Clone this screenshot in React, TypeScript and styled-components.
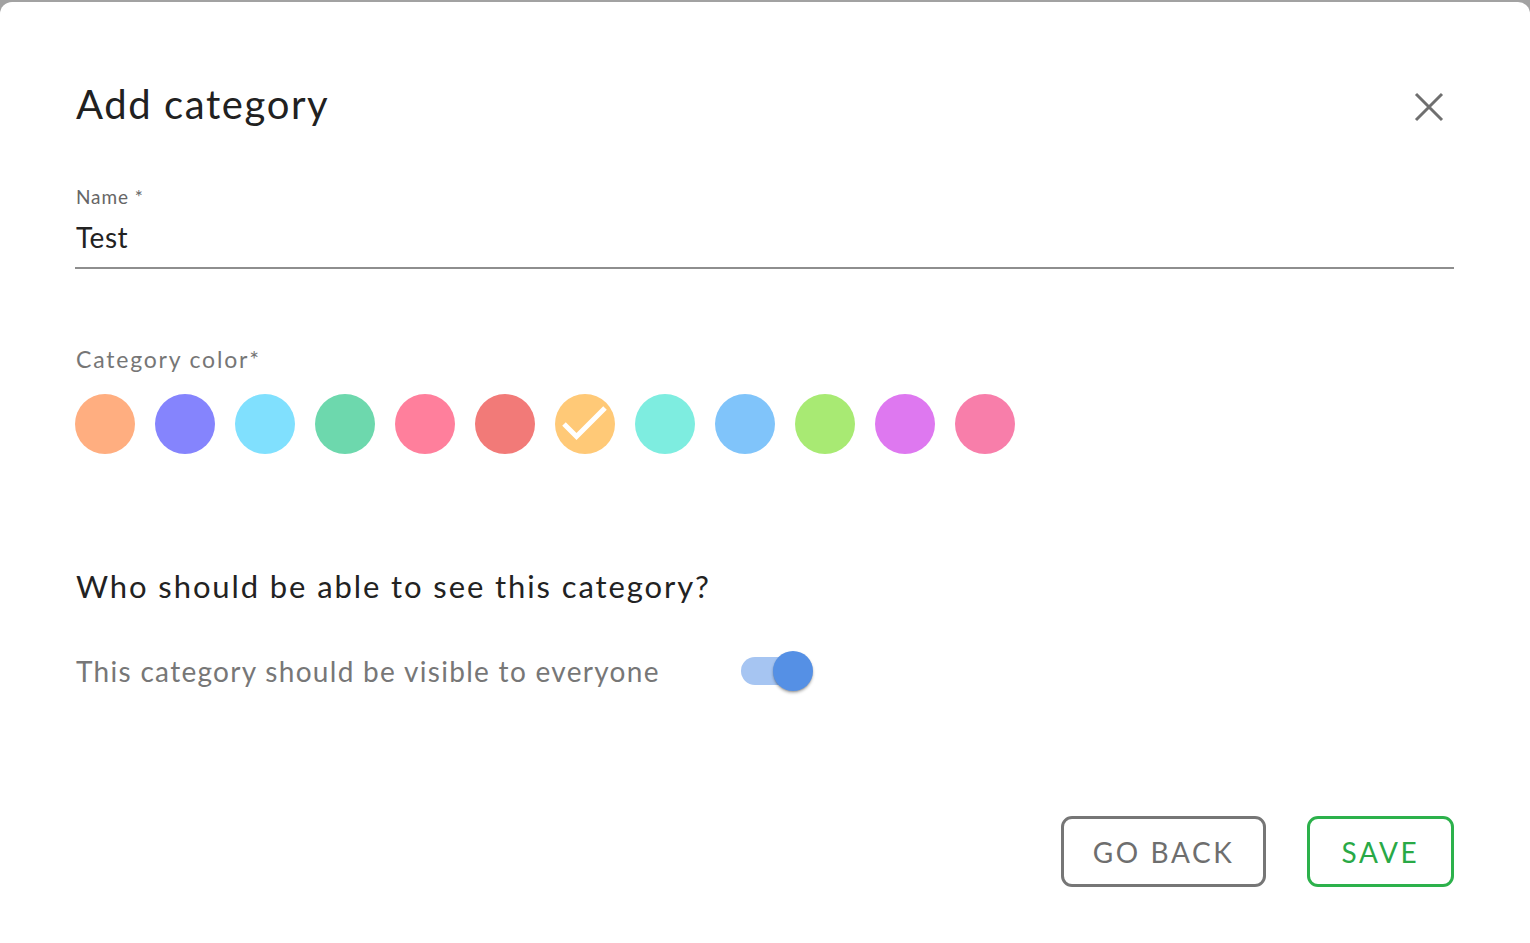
import React, { useState } from "react";
import styled, { createGlobalStyle } from "styled-components";

const Global = createGlobalStyle`
  html, body { margin: 0; padding: 0; }
  body {
    background: #a2a2a2;
    font-family: "Lato", "Noto Sans", "Liberation Sans", sans-serif;
    overflow: hidden;
  }
  * { box-sizing: border-box; }
`;

const Dialog = styled.div`
  margin-top: 2px;
  height: calc(100vh - 2px);
  background: #ffffff;
  border-radius: 12px 12px 0 0;
  padding: 78px 76px 0 75px;
  display: flex;
  flex-direction: column;
`;

const Header = styled.div`
  display: flex;
  align-items: center;
  justify-content: space-between;
`;

const Title = styled.h1`
  margin: 0 0 0 1px;
  font-size: 40px;
  line-height: 48px;
  font-weight: 400;
  color: #212121;
  letter-spacing: 1.6px;
`;

const CloseButton = styled.button`
  border: 0;
  background: transparent;
  padding: 0;
  width: 30px;
  height: 30px;
  margin: 6px 10px 0 0;
  cursor: pointer;
  display: flex;
  align-items: center;
  justify-content: center;
`;

const Field = styled.div`
  margin-top: 58px;
  display: flex;
  flex-direction: column;
  border-bottom: 2px solid #8e8e8e;
  padding-bottom: 13px;
`;

const FieldLabel = styled.label`
  font-size: 19px;
  line-height: 22px;
  color: #666666;
  margin-left: 1px;
  letter-spacing: 0.9px;
`;

const FieldValue = styled.div`
  margin-top: 12px;
  font-size: 28px;
  line-height: 34px;
  color: #222222;
  margin-left: 1px;
  letter-spacing: 0.5px;
`;

const SectionLabel = styled.div`
  margin-top: 76px;
  font-size: 23px;
  line-height: 28px;
  color: #767676;
  margin-left: 1px;
  letter-spacing: 1.8px;
`;

const Swatches = styled.div`
  margin-top: 21px;
  display: flex;
  gap: 20px;
`;

const Swatch = styled.button<{ $color: string }>`
  width: 60px;
  height: 60px;
  border-radius: 50%;
  border: 0;
  padding: 0;
  background: ${(p) => p.$color};
  cursor: pointer;
  display: block;
`;

const Question = styled.h2`
  margin: 113px 0 0 1px;
  font-size: 31px;
  line-height: 38px;
  font-weight: 400;
  color: #222222;
  letter-spacing: 1.9px;
`;

const ToggleRow = styled.div`
  margin-top: 46px;
  display: flex;
  align-items: center;
  height: 40px;
`;

const ToggleLabel = styled.span`
  font-size: 28px;
  line-height: 34px;
  color: #777777;
  margin-left: 1px;
  width: 665px;
  letter-spacing: 1.3px;
`;

const Track = styled.button<{ $on: boolean }>`
  position: relative;
  width: 64px;
  height: 28px;
  border-radius: 14px;
  border: 0;
  padding: 0;
  background: ${(p) => (p.$on ? "#a6c5f2" : "#c8c8c8")};
  cursor: pointer;
`;

const Thumb = styled.span<{ $on: boolean }>`
  position: absolute;
  top: -6px;
  left: ${(p) => (p.$on ? "32px" : "-8px")};
  width: 40px;
  height: 40px;
  border-radius: 50%;
  background: ${(p) => (p.$on ? "#5590e5" : "#f5f5f5")};
  box-shadow: 0 2px 3px rgba(0, 0, 0, 0.28), 0 1px 1px rgba(0, 0, 0, 0.12);
`;

const Actions = styled.div`
  margin-top: 125px;
  display: flex;
  justify-content: flex-end;
  gap: 41px;
`;

const ActionButton = styled.button<{ $tone: "neutral" | "success"; $w: number }>`
  width: ${(p) => p.$w}px;
  height: 71px;
  border-radius: 11px;
  border: 3px solid ${(p) => (p.$tone === "success" ? "#2cb14b" : "#767676")};
  color: ${(p) => (p.$tone === "success" ? "#29a946" : "#6e6e6e")};
  background: #ffffff;
  font-family: "Lato", "Noto Sans", sans-serif;
  font-size: 28px;
  letter-spacing: 2.6px;
  padding: 0;
  cursor: pointer;
`;

const COLORS = [
  "#ffae80",
  "#8584fd",
  "#80e0fe",
  "#6dd8ad",
  "#ff7f9c",
  "#f27a78",
  "#ffc977",
  "#7eede0",
  "#80c4fa",
  "#a8ea73",
  "#de78f0",
  "#f87eaa",
];

export default function App() {
  const [selected, setSelected] = useState(6);
  const [visible, setVisible] = useState(true);
  return (
    <>
      <Global />
      <Dialog>
        <Header>
          <Title>Add category</Title>
          <CloseButton aria-label="Close">
            <svg width="30" height="30" viewBox="0 0 30 30">
              <path d="M2 2 L28 28 M28 2 L2 28" stroke="#6f6f6f" strokeWidth="3" fill="none" />
            </svg>
          </CloseButton>
        </Header>
        <Field>
          <FieldLabel>Name *</FieldLabel>
          <FieldValue>Test</FieldValue>
        </Field>
        <SectionLabel>Category color*</SectionLabel>
        <Swatches>
          {COLORS.map((c, i) => (
            <Swatch key={c} $color={c} onClick={() => setSelected(i)}>
              {selected === i && (
                <svg width="60" height="60" viewBox="0 0 60 60">
                  <path d="M9 30 L21.5 42.5 L50 14" stroke="#ffffff" strokeWidth="5" fill="none" />
                </svg>
              )}
            </Swatch>
          ))}
        </Swatches>
        <Question>Who should be able to see this category?</Question>
        <ToggleRow>
          <ToggleLabel>This category should be visible to everyone</ToggleLabel>
          <Track $on={visible} onClick={() => setVisible(!visible)}>
            <Thumb $on={visible} />
          </Track>
        </ToggleRow>
        <Actions>
          <ActionButton $tone="neutral" $w={205}>GO BACK</ActionButton>
          <ActionButton $tone="success" $w={147}>SAVE</ActionButton>
        </Actions>
      </Dialog>
    </>
  );
}
